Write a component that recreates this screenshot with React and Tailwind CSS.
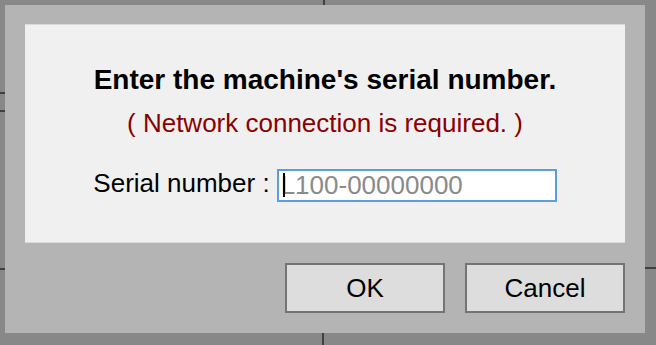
export default function App() {
  return (
    <div className="relative w-[656px] h-[345px] overflow-hidden bg-[#888888] pl-[5px] pt-[5px] font-['Liberation_Sans',Arial,sans-serif] text-black">
      {/* bits of the page underneath the modal */}
      <div className="absolute left-0 top-[92px] h-[2px] w-[5px] bg-[#404040]" />
      <div className="absolute left-0 top-[110px] h-[2px] w-[5px] bg-[#404040]" />
      <div className="absolute left-0 top-[268px] h-[2px] w-[5px] bg-[#404040]" />
      <div className="absolute right-0 top-[267px] h-[2px] w-[11px] bg-[#404040]" />
      <div className="absolute left-[323px] top-0 h-[5px] w-[2px] bg-[#404040]" />
      <div className="absolute left-[322px] bottom-0 h-[12px] w-[2px] bg-[#404040]" />

      <div className="relative flex h-[328px] w-[640px] flex-col bg-[#b4b4b4] px-[20px] pt-[19px] pb-[20px]">
        <div className="flex h-[219px] flex-col items-center border-y border-[#dadada] bg-[#f0f0f0] pt-[39px]">
          <div className="text-[28px] font-bold leading-[32px]">Enter the machine's serial number.</div>
          <div className="mt-[12px] text-[26px] leading-[30px] text-[#8b0000]">( Network connection is required. )</div>
          <div className="mt-[31px] flex items-start gap-[7px]">
            <label className="text-[26px] leading-[28px]">Serial number :</label>
            <div className="relative h-[33px] w-[280px] border-2 border-[#5c9de0] bg-white pl-[2px] text-[26px] leading-[29px] text-[#8a8a8a]">
              L100-00000000
              <span className="absolute left-[4px] top-[2px] h-[24px] w-[2px] bg-black" />
            </div>
          </div>
        </div>
        <div className="mt-[20px] flex justify-end gap-[20px]">
          <button className="flex h-[50px] w-[160px] items-center justify-center border-2 border-[#747474] bg-[#dddddd] text-[26px] leading-[30px]">OK</button>
          <button className="flex h-[50px] w-[160px] items-center justify-center border-2 border-[#747474] bg-[#dddddd] text-[26px] leading-[30px]">Cancel</button>
        </div>
      </div>
    </div>
  );
}
